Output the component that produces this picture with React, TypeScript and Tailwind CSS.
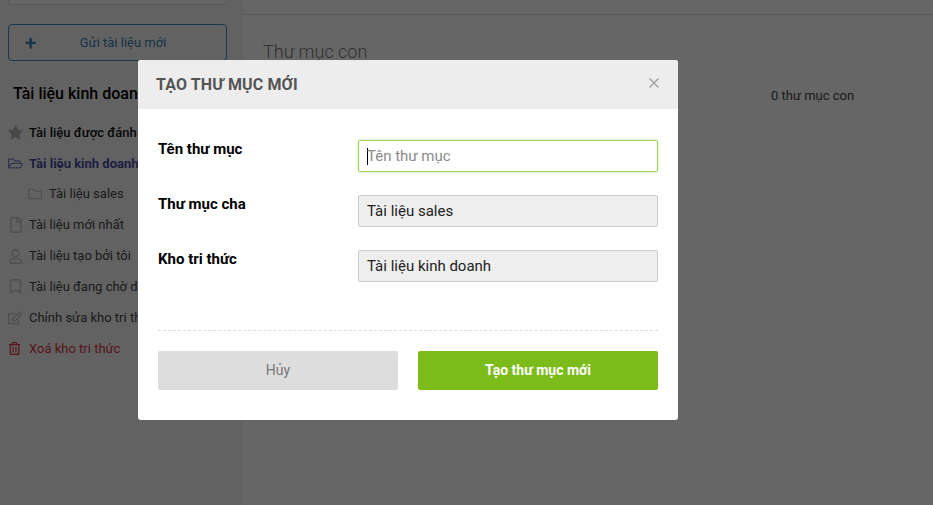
import {
  FaStar,
  FaRegFolderOpen,
  FaRegFolder,
  FaRegFile,
  FaRegUser,
  FaRegBookmark,
  FaRegEdit,
  FaRegTrashAlt,
} from "react-icons/fa";
import type { ComponentType } from "react";

type NavItem = {
  label: string;
  Icon: ComponentType<{ className?: string }>;
  text?: string;
  icon: string;
  indent?: boolean;
};

const navItems: NavItem[] = [
  { label: "Tài liệu được đánh dấu", Icon: FaStar, text: "font-medium text-[#111]", icon: "text-[#b5b5b5] text-[15px]" },
  { label: "Tài liệu kinh doanh", Icon: FaRegFolderOpen, text: "font-bold text-[#4a4fa3]", icon: "text-[#7f83c4] text-[15px]" },
  { label: "Tài liệu sales", Icon: FaRegFolder, indent: true, icon: "text-[#c8c8c8] text-[14px]" },
  { label: "Tài liệu mới nhất", Icon: FaRegFile, icon: "text-[#c8c8c8] text-[16px]" },
  { label: "Tài liệu tạo bởi tôi", Icon: FaRegUser, icon: "text-[#c8c8c8] text-[15px]" },
  { label: "Tài liệu đang chờ duyệt", Icon: FaRegBookmark, icon: "text-[#c8c8c8] text-[15px]" },
  { label: "Chỉnh sửa kho tri thức", Icon: FaRegEdit, icon: "text-[#c0c0c0] text-[14px]" },
  { label: "Xoá kho tri thức", Icon: FaRegTrashAlt, text: "text-[#d8353a]", icon: "text-[#d8353a] text-[13px]" },
];

function Sidebar() {
  return (
    <aside className="h-full w-[243px] shrink-0 overflow-hidden bg-[#f6f6f6] px-2">
      <div className="mr-[8px] h-[5px] rounded-b border border-t-0 border-[#ddd] bg-white" />
      <button className="mt-[19px] flex h-[37px] w-[219px] items-center rounded border border-[#3b8ec4] text-[13px] text-[#3b7fae]">
        <span className="ml-[16px] text-[20px] font-medium leading-none">+</span>
        <span className="flex-1 pr-[16px] text-center">Gửi tài liệu mới</span>
      </button>
      <h2 className="ml-[5px] mt-[22px] whitespace-nowrap text-[16px] font-medium leading-[22px] text-black">
        Tài liệu kinh doanh
      </h2>
      <ul className="mt-[12px]">
        {navItems.map((item) => (
          <li
            key={item.label}
            className={`flex h-[30.9px] items-center whitespace-nowrap text-[13px] ${item.indent ? "pl-[20px]" : ""} ${item.text ?? "text-[#444]"}`}
          >
            <span className="flex w-[21px] shrink-0 items-center">
              <item.Icon className={item.icon} />
            </span>
            {item.label}
          </li>
        ))}
      </ul>
    </aside>
  );
}

function Field({ label, value, focus }: { label: string; value: string; focus?: boolean }) {
  return (
    <div className="flex items-start">
      <label className="w-[200px] text-[15px] font-bold leading-[18px] text-black">{label}</label>
      {focus ? (
        <div className="flex h-[32px] w-[300px] items-center rounded-[2px] border border-[#9ed35f] bg-white pl-[8px] text-[15px] text-[#8a8a8a] shadow-[0_0_3px_rgba(125,189,26,0.4)]">
          <span className="mr-[-1px] h-[17px] w-px bg-black" />
          {value}
        </div>
      ) : (
        <div className="flex h-[32px] w-[300px] items-center rounded-[2px] border border-[#ccc] bg-[#eee] pl-[8px] text-[15px] text-[#222]">
          {value}
        </div>
      )}
    </div>
  );
}

function Modal() {
  return (
    <div className="absolute left-[138px] top-[60px] h-[360px] w-[540px] overflow-hidden rounded-[3px] bg-white">
      <div className="flex h-[49px] items-center justify-between bg-[#ededed] pl-[18px] pr-[19px]">
        <h3 className="text-[16px] font-bold tracking-[0.13px] text-[#555]">TẠO THƯ MỤC MỚI</h3>
        <svg width="10" height="10" viewBox="0 0 10 10" className="mb-[3px] text-[#a5a5a5]">
          <path d="M0.5 0.5 L9.5 9.5 M9.5 0.5 L0.5 9.5" stroke="currentColor" strokeWidth="1.5" fill="none" />
        </svg>
      </div>
      <div className="px-[20px]">
        <div className="flex flex-col gap-[23px] pt-[31px]">
          <Field label="Tên thư mục" value="Tên thư mục" focus />
          <Field label="Thư mục cha" value="Tài liệu sales" />
          <Field label="Kho tri thức" value="Tài liệu kinh doanh" />
        </div>
        <div className="mt-[48px] border-t border-dashed border-[#ddd]" />
        <div className="mt-[20px] flex gap-[20px]">
          <button className="h-[39px] w-[240px] rounded-[2px] bg-[#ddd] text-[14px] text-[#777]">Hủy</button>
          <button className="h-[39px] w-[240px] rounded-[2px] bg-[#7cbc1a] text-[14px] font-bold text-white">
            Tạo thư mục mới
          </button>
        </div>
      </div>
    </div>
  );
}

export default function App() {
  return (
    <div className="relative flex h-[505px] w-[933px] overflow-hidden bg-white font-['Roboto',sans-serif]">
      <Sidebar />
      <main className="flex-1 pt-[14px]">
        <div className="border-t border-[#ddd]" />
        <div className="pl-[20px] pt-[25px] text-[18px] font-light leading-[24px] text-[#777]">Thư mục con</div>
        <div className="pl-[528px] pt-[23px] text-[13px] leading-[18px] text-[#444]">0 thư mục con</div>
      </main>
      <div className="absolute inset-0 bg-black/60" />
      <Modal />
    </div>
  );
}
